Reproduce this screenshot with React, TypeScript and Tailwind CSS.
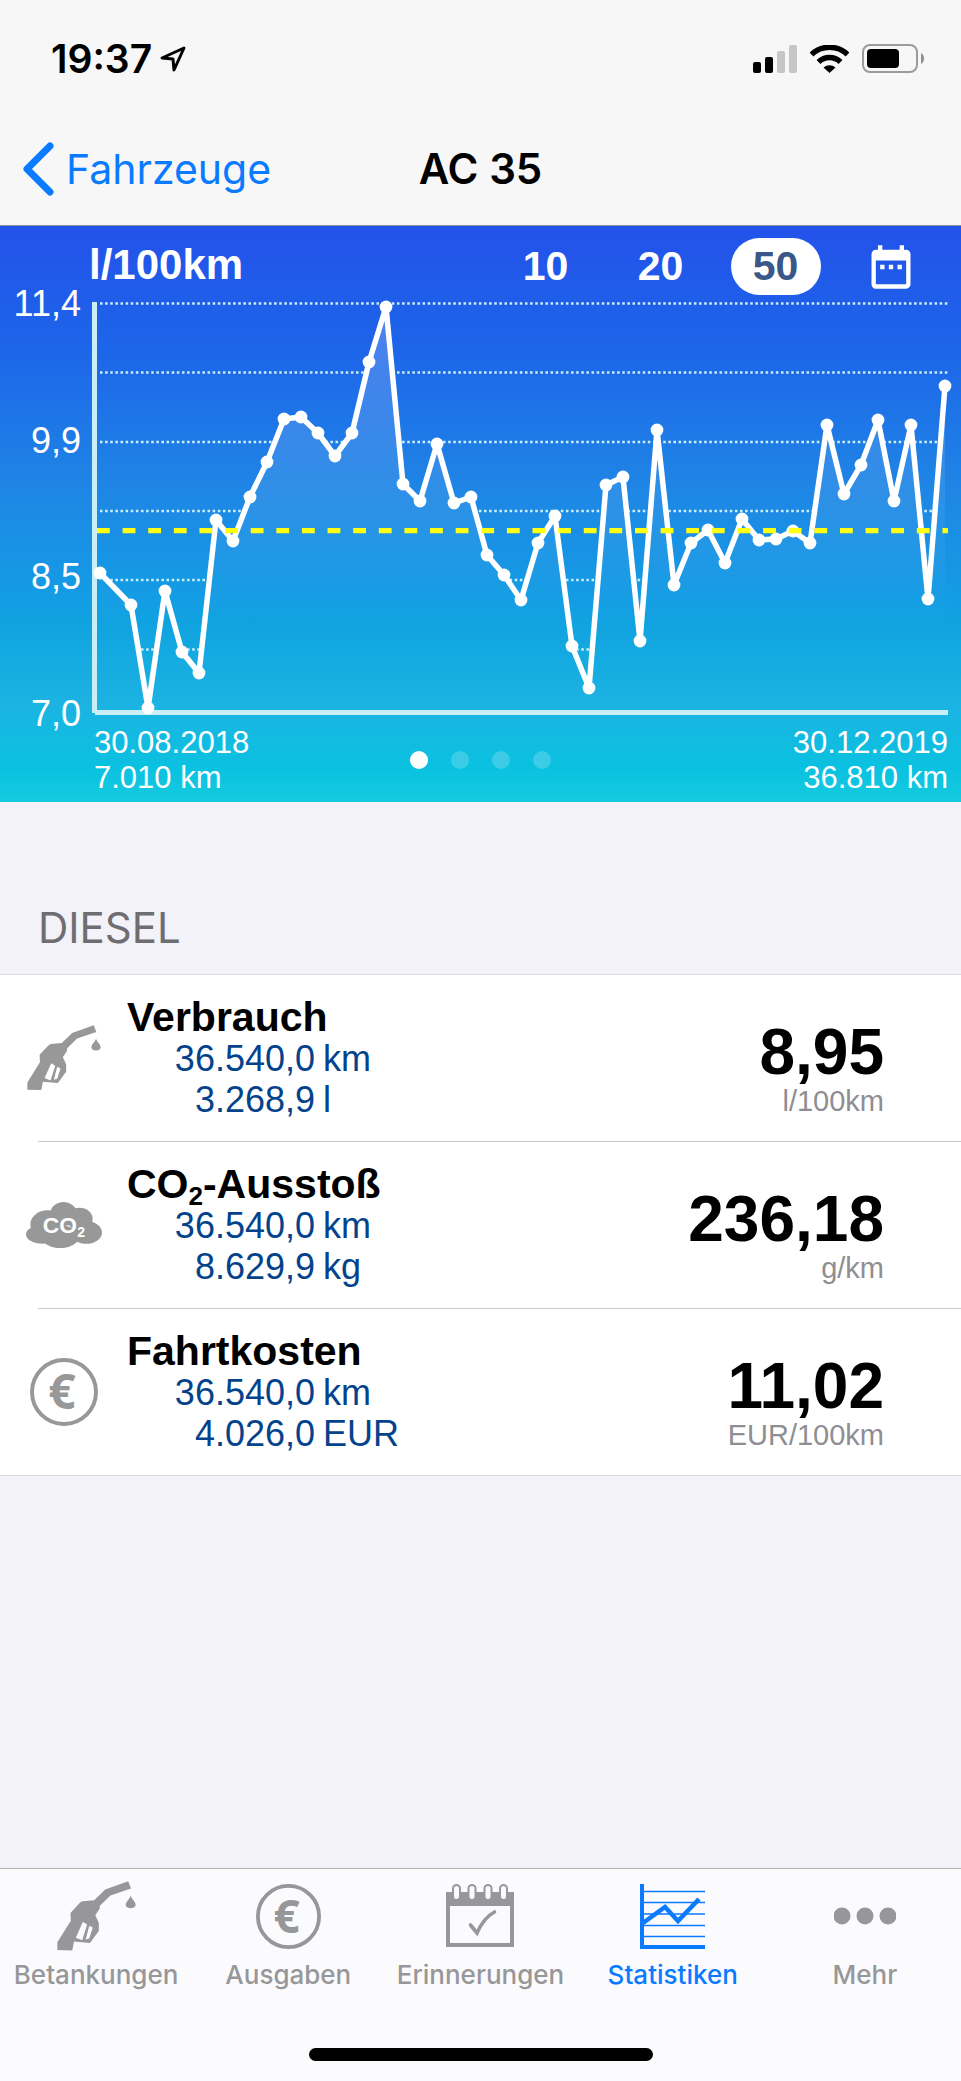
import { useState } from 'react';
import { MdDateRange } from 'react-icons/md';

// Consumption curve, in plot units (x, y)
const points = [
  [8, 278], [39, 310], [56, 413], [73, 296], [90, 357], [107, 378], [124, 225], [141, 246],
  [158, 202], [175, 167], [192, 124], [209, 122], [226, 138], [243, 161], [260, 138], [277, 67],
  [294, 12], [311, 189], [328, 206], [345, 149], [362, 208], [379, 202], [395, 260], [412, 280],
  [429, 305], [446, 248], [463, 221], [480, 351], [497, 393], [514, 190], [531, 182], [548, 346],
  [565, 135], [582, 290], [599, 248], [616, 235], [633, 268], [650, 224], [667, 245], [684, 244],
  [701, 236], [718, 248], [735, 130], [752, 199], [769, 170], [786, 125], [802, 206], [819, 130],
  [836, 304], [853, 91],
];

const gridLines = [8.5, 77.5, 147, 216, 285, 354.5];
const axisLabels = ['11,4', '9,9', '8,5', '7,0'];
const ranges = ['10', '20', '50'];

function Nozzle({ className }: { className: string }) {
  return (
    <svg viewBox="80 437 223 197" className={className} fill="currentColor" aria-hidden="true">
      <path
        fillRule="evenodd"
        d="M281 438 289 458 231 478 201 507 200 516 188 534 198 555 198 578 173 612 128 608 123 633 81 632 81 610 119 549 118 527 146 497 152 494 185 491 216 461ZM153 552 133 597 151 604 165 560ZM171 563 161 602 171 599 181 568Z"
      />
      <path d="M288 478c2 10 14 18 14 26 0 6-6 10-14 10s-14-4-14-10c0-8 12-16 14-26Z" />
    </svg>
  );
}

function Euro({ className }: { className: string }) {
  return (
    <svg viewBox="0 0 68 68" className={className} aria-hidden="true">
      <circle cx="34" cy="34" r="32" fill="none" stroke="currentColor" strokeWidth="4" />
      <text
        x="32"
        y="51"
        textAnchor="middle"
        fontSize="48"
        fontWeight="700"
        fontFamily="Open Sans, sans-serif"
        fill="currentColor"
      >
        €
      </text>
    </svg>
  );
}

function Cloud({ className }: { className: string }) {
  return (
    <svg viewBox="78 66 227 138" className={className} fill="currentColor" aria-hidden="true">
      <ellipse cx="143" cy="133" rx="52" ry="42" />
      <ellipse cx="190" cy="102" rx="40" ry="36" />
      <ellipse cx="238" cy="116" rx="39" ry="33" />
      <ellipse cx="258" cy="157" rx="47" ry="34" />
      <ellipse cx="128" cy="163" rx="50" ry="28" />
      <ellipse cx="180" cy="170" rx="56" ry="34" />
      <g fill="#fff" fontFamily="Liberation Sans, sans-serif" fontWeight="700">
        <text x="128" y="159" fontSize="68">CO</text>
        <text x="231" y="171" fontSize="42">2</text>
      </g>
    </svg>
  );
}

function Reminder({ className }: { className: string }) {
  return (
    <svg viewBox="0 0 68 64" className={className} fill="none" stroke="currentColor" aria-hidden="true">
      <path d="M0 8h68v14H0z" fill="currentColor" stroke="none" />
      <path d="M2 10v51h64V10" strokeWidth="4" />
      {[10.5, 26, 42, 57.5].map((x) => (
        <rect key={x} x={x - 3.5} y="1" width="7" height="15" rx="3.500" fill="#fbfbfd" strokeWidth="2" />
      ))}
      <path d="m24.500 41 6.500 8c4-9 10-17 17.500-21" strokeWidth="3.600" strokeLinecap="round" />
    </svg>
  );
}

function Stats({ className }: { className: string }) {
  return (
    <svg viewBox="0 0 65 65" className={className} fill="none" stroke="currentColor" aria-hidden="true">
      <path d="M2 0v63h63" strokeWidth="4" />
      <path d="M4 7.500h61M4 18.500h61M4 30h61M4 41.500h61M4 52.500h61" strokeWidth="1.400" />
      <path d="M3 39 25 23 38 37 59 15" strokeWidth="4.500" />
    </svg>
  );
}

function More({ className }: { className: string }) {
  return (
    <svg viewBox="0 0 62 65" className={className} fill="currentColor" aria-hidden="true">
      <circle cx="8" cy="32" r="8.500" />
      <circle cx="31" cy="32" r="8.500" />
      <circle cx="54" cy="32" r="8.500" />
    </svg>
  );
}

const rows = [
  {
    id: 'consumption',
    icon: <Nozzle className="w-[74px]" />,
    title: 'Verbrauch',
    lines: [['36.540,0', 'km'], ['3.268,9', 'l']],
    value: '8,95',
    unit: 'l/100km',
  },
  {
    id: 'co2',
    icon: <Cloud className="w-[76px]" />,
    title: <>CO<sub className="text-[26px] leading-none">2</sub>-Ausstoß</>,
    lines: [['36.540,0', 'km'], ['8.629,9', 'kg']],
    value: '236,18',
    unit: 'g/km',
  },
  {
    id: 'costs',
    icon: <Euro className="w-[68px]" />,
    title: 'Fahrtkosten',
    lines: [['36.540,0', 'km'], ['4.026,0', 'EUR']],
    value: '11,02',
    unit: 'EUR/100km',
  },
];

const tabs = [
  { label: 'Betankungen', icon: <Nozzle className="w-[79px]" /> },
  { label: 'Ausgaben', icon: <Euro className="w-[65px]" /> },
  { label: 'Erinnerungen', icon: <Reminder className="w-[68px]" /> },
  { label: 'Statistiken', icon: <Stats className="w-[65px]" /> },
  { label: 'Mehr', icon: <More className="w-[62px]" /> },
];

function StatusBar() {
  return (
    <div className="flex h-[113px] items-center justify-between pl-[51px] pr-[36px] pt-1">
      <div className="flex items-center gap-2">
        <span className="text-[39px] font-semibold leading-none">19:37</span>
        <svg viewBox="0 0 26 26" className="w-[26px]" fill="none" stroke="#000" strokeWidth="3" strokeLinejoin="round" aria-hidden="true">
          <path d="M24 2 2 12 13 13 14 24Z" />
        </svg>
      </div>
      <div className="flex items-center gap-[13px]">
        <svg viewBox="0 0 44 28" className="w-11" aria-hidden="true">
          <rect x="0" y="17" width="8" height="11" rx="2" />
          <rect x="12" y="12" width="8" height="16" rx="2" />
          <rect x="24" y="6" width="8" height="22" rx="2" fill="#c6c6c6" />
          <rect x="36" y="0" width="8" height="28" rx="2" fill="#c6c6c6" />
        </svg>
        <svg viewBox="0 0 39 28" className="w-[39px]" fill="none" stroke="#000" aria-hidden="true">
          <path d="M1.500 9.500a26 26 0 0 1 36 0" strokeWidth="5.500" />
          <path d="M8.500 17a16 16 0 0 1 22 0" strokeWidth="5.500" />
          <path d="M19.500 28 13.500 22.500a9 9 0 0 1 12 0Z" fill="#000" stroke="none" />
        </svg>
        <svg viewBox="0 0 63 29" className="w-[63px]" aria-hidden="true">
          <rect x="1" y="1" width="54" height="27" rx="7" fill="none" stroke="#9b9b9b" strokeWidth="2" />
          <rect x="5" y="5" width="32" height="19" rx="4" />
          <path d="M59 9c4 2 4 9 0 11Z" fill="#8e8e8e" />
        </svg>
      </div>
    </div>
  );
}

function Chart() {
  const [range, setRange] = useState('50');
  const curve = points.map((p) => p.join(' ')).join(' L');

  return (
    <section className="bg-[linear-gradient(#2352ea_0%,#1d66e9_22%,#1f85e5_45%,#139de4_65%,#10a3e0_69%,#1cb3e2_83%,#0ac1e0_94%,#15cbe0_100%)] pb-[7px] pt-3 font-['Liberation_Sans',sans-serif] text-white">
      <div className="flex items-center justify-between pl-[89px] pr-[13px]">
        <h2 className="pb-1 text-[42px] font-bold leading-none">l/100km</h2>
        <div className="flex">
          {ranges.map((r) => (
            <button key={r} onClick={() => setRange(r)} className="flex w-[115px] justify-center">
              <span
                className={
                  r === range
                    ? 'w-[90px] rounded-full bg-white text-[41px] font-bold leading-[57px] text-[#3a5787]'
                    : 'text-[41px] font-bold leading-[57px]'
                }
              >
                {r}
              </span>
            </button>
          ))}
          <button aria-label="Zeitraum" className="flex w-[115px] items-center justify-center">
            <MdDateRange className="size-[52px]" />
          </button>
        </div>
      </div>

      <div className="flex">
        <div className="-mb-[15px] -mt-[9px] flex w-[92px] shrink-0 flex-col justify-between pr-[11px] text-right text-4xl leading-9">
          {axisLabels.map((l) => (
            <span key={l}>{l}</span>
          ))}
        </div>
        <svg viewBox="0 0 869 422" className="min-w-0 flex-1" aria-hidden="true">
          <defs>
            <linearGradient id="area" gradientUnits="userSpaceOnUse" x1="0" y1="12" x2="0" y2="330">
              <stop offset="0" stopColor="#fff" stopOpacity="0.22" />
              <stop offset="0.55" stopColor="#fff" stopOpacity="0.08" />
              <stop offset="1" stopColor="#fff" stopOpacity="0" />
            </linearGradient>
            <clipPath id="above">
              <path d={`M8 0 L${curve} L857 91 L857 0Z`} />
            </clipPath>
          </defs>
          <path d={`M8 420 L${curve} L853 420Z`} fill="url(#area)" />
          <g clipPath="url(#above)" stroke="#c9eef5" strokeWidth="2.600" strokeDasharray="2.560 2.560">
            {gridLines.map((y) => (
              <path key={y} d={`M8 ${y}H856`} />
            ))}
          </g>
          <path d="M2.500 7v411" stroke="#c9eef5" strokeWidth="5" />
          <path d="M3 417.500h853" stroke="#c9eef5" strokeWidth="5" />
          <path d={`M${curve}`} fill="none" stroke="#fff" strokeWidth="5.500" strokeLinejoin="round" />
          {points.map(([x, y]) => (
            <circle key={x} cx={x} cy={y} r="6.400" fill="#fff" />
          ))}
          <path d="M5 235.700h851" stroke="#ff1" strokeWidth="5.200" strokeDasharray="12.800 12.820" />
        </svg>
      </div>

      <div className="mt-2 grid grid-cols-[1fr_auto_1fr] items-center pl-[94px] pr-[13px] text-[31px] leading-[35px]">
        <p>
          30.08.2018
          <br />
          7.010 km
        </p>
        <div className="-ml-[82px] flex gap-[23px]">
          {[0, 1, 2, 3].map((i) => (
            <span key={i} className={i === 0 ? 'size-[18px] rounded-full bg-white' : 'size-[18px] rounded-full bg-white/20'} />
          ))}
        </div>
        <p className="text-right">
          30.12.2019
          <br />
          36.810 km
        </p>
      </div>
    </section>
  );
}

export default function App() {
  const [tab, setTab] = useState('Statistiken');

  return (
    <div className="flex min-h-screen flex-col bg-[#f3f2f8] font-[Inter,sans-serif] text-black">
      <header className="border-b border-[#8d8fa0] bg-[#f7f7f7]">
        <StatusBar />
        <nav className="grid h-28 grid-cols-[1fr_auto_1fr] items-center">
          <a href="#" className="flex items-center gap-3 pl-[22px] text-[41px] leading-none text-[#0a7aff]">
            <svg viewBox="0 0 32 54" className="w-8" fill="none" stroke="currentColor" strokeWidth="7" strokeLinecap="round" strokeLinejoin="round" aria-hidden="true">
              <path d="M28 4 5 27l23 23" />
            </svg>
            Fahrzeuge
          </a>
          <h1 className="text-[42px] font-semibold leading-none">AC 35</h1>
        </nav>
      </header>

      <Chart />

      <main className="flex-1 pb-10">
        <h2 className="px-[38px] pb-[21px] pt-[101px] text-[42px] leading-[50px] text-[#6d6d72]">DIESEL</h2>
        <ul className="border-t border-[#dcdbe0] bg-white font-['Liberation_Sans',sans-serif]">
          {rows.map((row, i) => (
            <li key={row.id}>
              <div className="flex items-center py-[21px] pr-[77px]">
                <div className="flex w-[127px] shrink-0 justify-center text-[#989898]">{row.icon}</div>
                <div className="flex-1">
                  <h3 className="text-[41px] font-bold leading-[42px]">{row.title}</h3>
                  {row.lines.map(([num, unit]) => (
                    <p key={num} className="flex gap-2 text-4xl leading-[41px] text-[#04438b]">
                      <span className="w-[188px] text-right">{num}</span>
                      <span>{unit}</span>
                    </p>
                  ))}
                </div>
                <div className="self-end text-right">
                  <p className="text-[64px] font-bold leading-[62px]">{row.value}</p>
                  <p className="text-[29px] leading-[37px] text-[#8e8e93]">{row.unit}</p>
                </div>
              </div>
              <div className={i < rows.length - 1 ? 'ml-[38px] h-px bg-[#cbcbcd]' : 'h-px bg-[#dcdbe0]'} />
            </li>
          ))}
        </ul>
      </main>

      <footer className="border-t border-[#b3b3b6] bg-[#fbfbfd]">
        <div className="grid grid-cols-5">
          {tabs.map((t) => (
            <button
              key={t.label}
              onClick={() => setTab(t.label)}
              className={
                t.label === tab
                  ? 'flex flex-col items-center pt-[10px] text-[#0a7aff]'
                  : 'flex flex-col items-center pt-[10px] text-[#979799]'
              }
            >
              <span className="flex h-[74px] items-center">{t.icon}</span>
              <span className="mt-[6px] text-[26px] font-medium leading-8">{t.label}</span>
            </button>
          ))}
        </div>
        <div className="mx-auto mb-5 mt-[57px] h-[13px] w-[344px] rounded-full bg-black" />
      </footer>
    </div>
  );
}
